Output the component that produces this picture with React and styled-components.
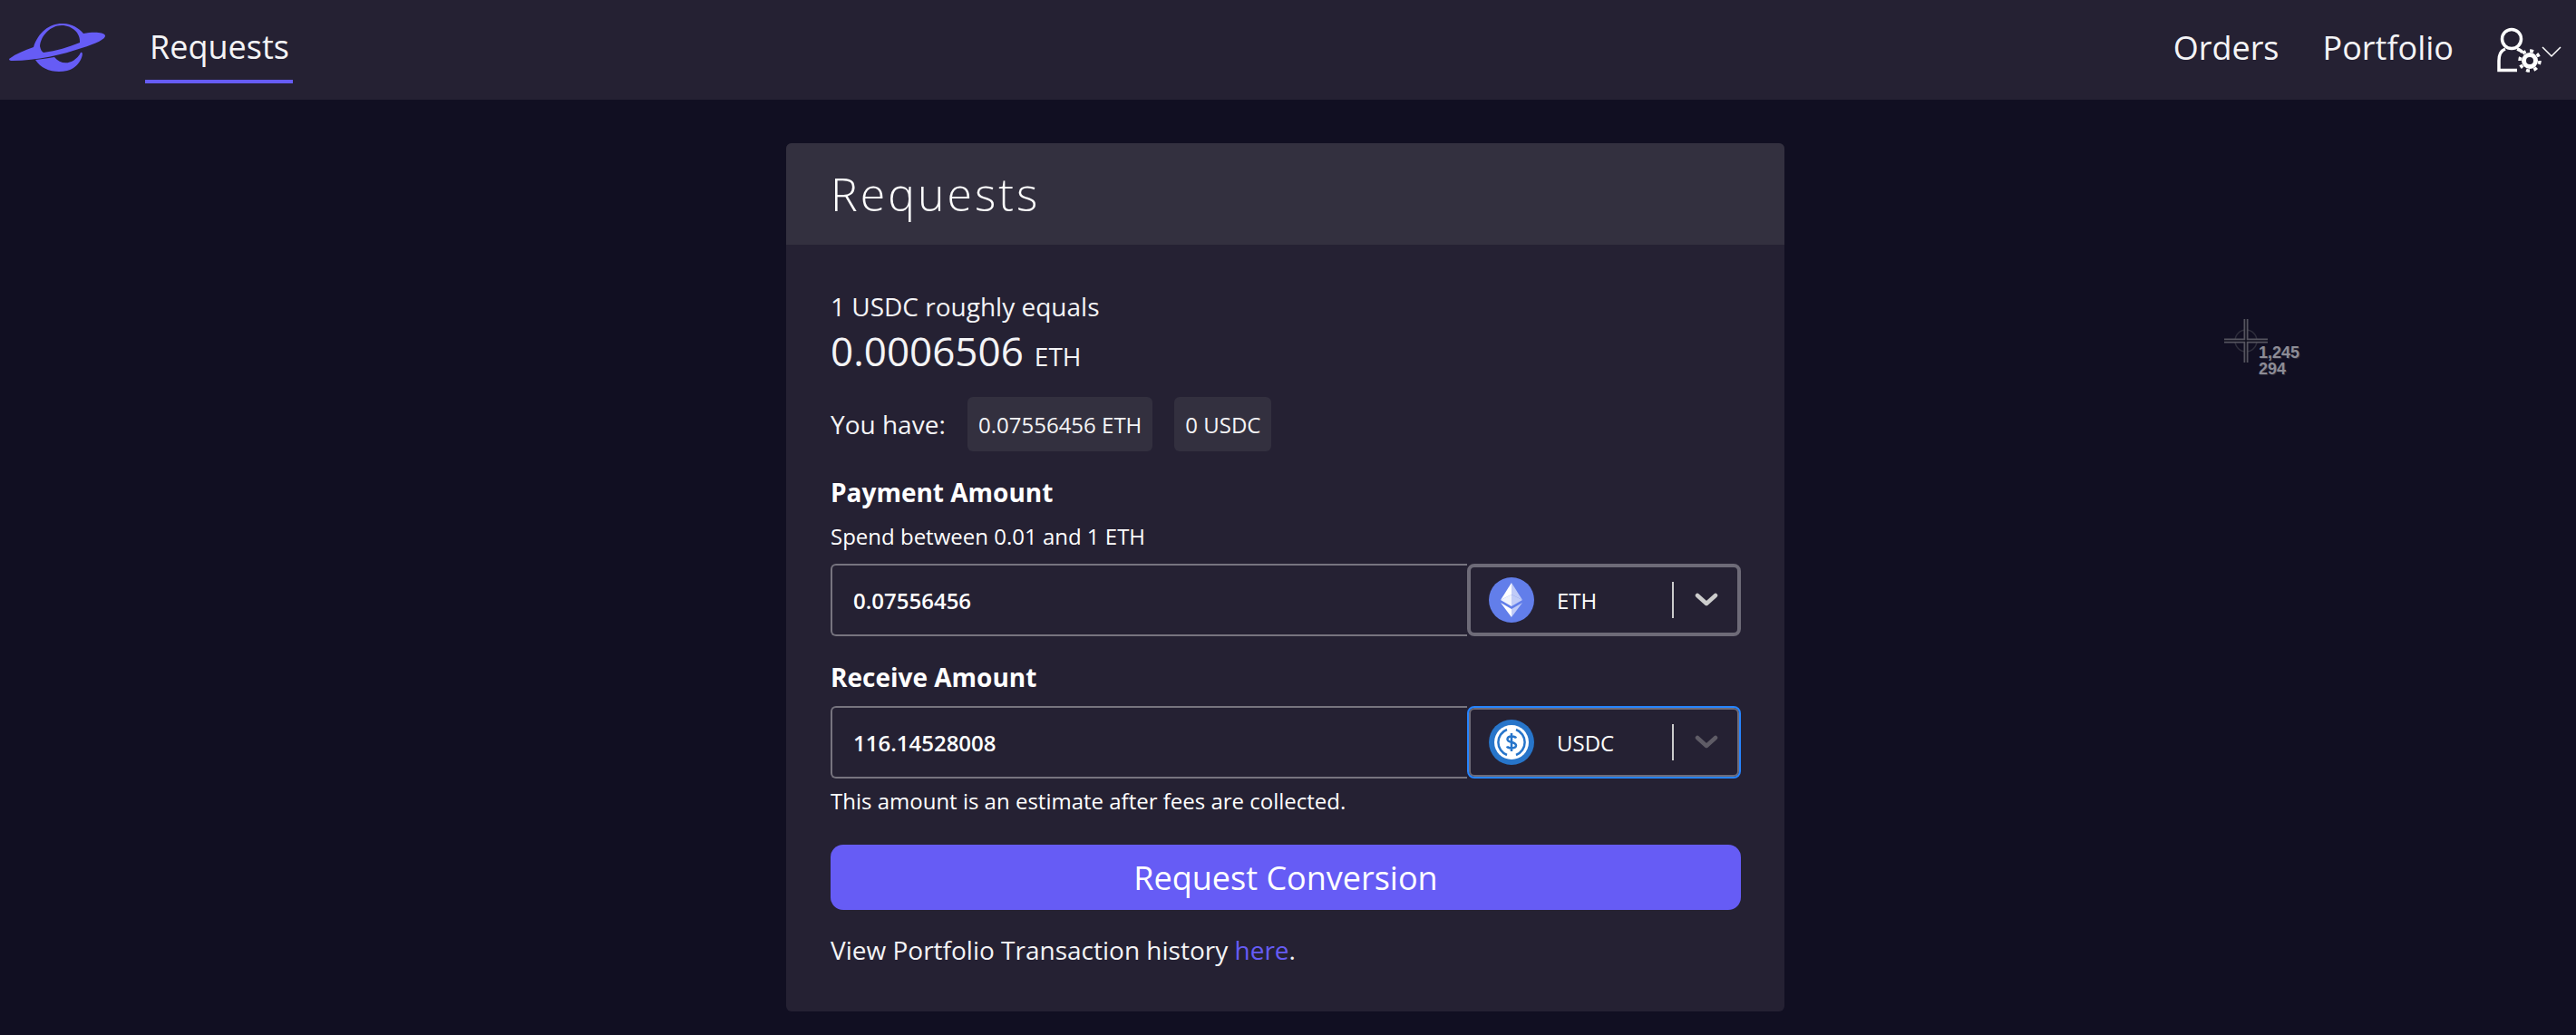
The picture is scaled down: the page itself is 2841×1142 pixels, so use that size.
import styled, { createGlobalStyle } from 'styled-components'

const GlobalStyle = createGlobalStyle`
    html, body {
        margin: 0;
        padding: 0;
        background-color: #110f22;
        color: #fff;
        font-family: "Open Sans", "Noto Sans", sans-serif;
    }
`

const Page = styled.div`
    position: relative;
    width: 2841px;
    height: 1142px;
    overflow: hidden;
    display: flex;
    flex-direction: column;
    align-items: center;
`

const Nav = styled.nav`
    width: 100%;
    height: 110px;
    flex-shrink: 0;
    box-sizing: border-box;
    background-color: #252133;
    display: flex;
    align-items: center;
    justify-content: space-between;
    padding: 0 15px 0 10px;
`

const NavSide = styled.div`
    display: flex;
    align-items: center;
    height: 100%;
`

const NavTab = styled.a`
    align-self: flex-start;
    height: 92px;
    box-sizing: border-box;
    margin-left: 40px;
    padding: 14px 4px 0 5px;
    display: flex;
    align-items: center;
    font-size: 36px;
    font-weight: 400;
    color: #f4f4f6;
    border-bottom: 4px solid #665cf5;
`

const NavLink = styled.a`
    font-size: 36px;
    font-weight: 400;
    color: #f4f4f6;
    margin-right: 48px;
    padding-bottom: 6px;
`

const Card = styled.section`
    width: 1101px;
    margin: 48px 6px 0 0;
    background-color: #252133;
    border-radius: 6px;
    overflow: hidden;
`

const CardHeader = styled.header`
    height: 112px;
    box-sizing: border-box;
    background-color: #33303f;
    padding: 0 49px;
    display: flex;
    align-items: center;
`

const Title = styled.h1`
    margin: 0;
    font-size: 50px;
    font-weight: 300;
    letter-spacing: 3px;
    color: #fff;
`

const CardBody = styled.div`
    padding: 49px 48px 0 49px;
    height: 846px;
    box-sizing: border-box;
`

const RateLabel = styled.div`
    font-size: 28px;
    font-weight: 400;
    line-height: 38px;
    color: #f4f4f6;
`

const RateValue = styled.div`
    font-size: 44px;
    font-weight: 400;
    line-height: 60px;
    color: #f4f4f6;
`

const RateUnit = styled.span`
    font-size: 28px;
    margin-left: 12px;
`

const Balances = styled.div`
    display: flex;
    align-items: center;
    margin-top: 15px;
    font-size: 28px;
    font-weight: 400;
    color: #f4f4f6;
`

const BalanceLabel = styled.span`
    width: 151px;
`

const Chip = styled.span`
    height: 60px;
    box-sizing: border-box;
    display: flex;
    align-items: center;
    padding: 0 12px;
    margin-right: 24px;
    border-radius: 6px;
    background-color: #33303f;
    font-size: 24px;
    font-weight: 400;
`

const FieldLabel = styled.div`
    font-size: 28px;
    font-weight: 700;
    line-height: 38px;
    margin-top: ${p => p.$top}px;
`

const Hint = styled.div`
    font-size: 24px;
    font-weight: 400;
    line-height: 34px;
    margin-top: ${p => p.$top}px;
`

const Field = styled.div`
    display: flex;
    height: 80px;
    margin-top: ${p => p.$top}px;
`

const AmountInput = styled.div`
    width: 702px;
    box-sizing: border-box;
    display: flex;
    align-items: center;
    padding-left: 23px;
    border: 2px solid #77747f;
    border-right: none;
    border-radius: 6px 0 0 6px;
    font-size: 24px;
    font-weight: 600;
    height: 80px;
`

const TokenSelect = styled.div`
    flex: 1;
    box-sizing: border-box;
    display: flex;
    align-items: center;
    padding-left: ${p => (p.$focused ? 22 : 20)}px;
    border: ${p => (p.$focused ? '2px solid #2684ff' : '4px solid #6e6b78')};
    border-radius: 8px;
    box-shadow: ${p => (p.$focused ? 'inset 0 0 0 2px #6e6b78' : 'none')};
`

const TokenName = styled.span`
    width: 127px;
    margin-left: 25px;
    font-size: 24px;
    font-weight: 400;
`

const Divider = styled.span`
    width: 2px;
    height: 40px;
    background-color: #ccc;
    margin-right: 23px;
`

const Chevron = styled.svg`
    width: 26px;
    height: 16px;
    color: ${p => (p.$muted ? '#5f5c66' : '#cccccc')};
`

const ConvertButton = styled.button`
    display: block;
    width: 100%;
    height: 72px;
    margin-top: 31px;
    border: none;
    border-radius: 14px;
    background-color: #665cf5;
    color: #fff;
    font-family: inherit;
    font-size: 36px;
    font-weight: 400;
`

const HistoryRow = styled.p`
    margin: 25px 0 0;
    font-size: 28px;
    font-weight: 400;
    line-height: 38px;
    color: #f4f4f6;
`

const HereLink = styled.a`
    color: #665cf5;
`

const Crosshair = styled.div`
    position: absolute;
    left: 2452px;
    top: 351px;
    width: 90px;
    height: 64px;
`

const CrosshairText = styled.div`
    position: absolute;
    left: 39px;
    top: 29px;
    font-family: "Liberation Sans", sans-serif;
    font-size: 18px;
    font-weight: 700;
    line-height: 18px;
    color: #8d8c96;
    text-shadow: 1px 1px 0 #2a2938;
`

function Logo() {
    return (
        <svg width="110" height="60" viewBox="0 0 110 60" fill="#665cf5">
            <path
                fillRule="evenodd"
                d="M0 40 C8 34 18 30 27 27 C32 10 46 0 60 1 C69 1 77 6 82 12 C92 10 104 10 106 14 C107 18 96 23 80 28 C60 35 30 42 4 42 C2 42 0 42 0 40 Z M34 26 C35 30 36 32 38 33 C52 31 66 27 78 22 C79 12 70 3 58 3 C46 3 35 14 34 26 Z"
            />
            <path d="M29 41 C38 40 44 39 50 38 C58 48 72 46 79 33 C84 31 79 50 64 53 C50 56 36 52 29 41 Z" />
        </svg>
    )
}

function UserGear() {
    return (
        <svg width="72" height="50" viewBox="0 0 72 50" fill="none">
            <circle cx="16" cy="13" r="10.5" stroke="#fff" strokeWidth="3.5" />
            <path d="M9 24 C4 26 2 31 2 37 V47.5 H22" stroke="#fff" strokeWidth="3.5" />
            <path d="M22 24 C25 25 27 26 28 28" stroke="#fff" strokeWidth="3.5" />
            <circle cx="36" cy="37" r="6.5" stroke="#fff" strokeWidth="5" />
            <circle cx="36" cy="37" r="11" stroke="#fff" strokeWidth="3.5" strokeDasharray="4 4.6" />
            <path d="M50 22 L60 32 L70 22" stroke="#fff" strokeWidth="1.5" />
        </svg>
    )
}

function EthIcon() {
    return (
        <svg width="50" height="50" viewBox="0 0 50 50">
            <circle cx="25" cy="25" r="25" fill="#627eea" />
            <path d="M25 6 V19 L37 25 Z" fill="#fff" fillOpacity=".6" />
            <path d="M25 6 L13 25 L25 19 Z" fill="#fff" />
            <path d="M25 19 L13 25 L25 32 Z" fill="#fff" fillOpacity=".9" />
            <path d="M25 19 V32 L37 25 Z" fill="#c1ccf7" />
            <path d="M25 35 V44 L37 28 Z" fill="#fff" fillOpacity=".6" />
            <path d="M25 35 L13 28 L25 44 Z" fill="#fff" />
        </svg>
    )
}

function UsdcIcon() {
    return (
        <svg width="50" height="50" viewBox="0 0 50 50">
            <circle cx="25" cy="25" r="25" fill="#2775ca" />
            <circle cx="25" cy="25" r="19" fill="#fff" />
            <path d="M20 11 A15 15 0 0 0 20 39 M30 11 A15 15 0 0 1 30 39" fill="none" stroke="#2775ca" strokeWidth="2.5" />
            <path d="M30 20.5 C29 18 21 17.5 20.5 21.5 C20 26 30 24 30 28.5 C30 32.5 21 32 20 29.5 M25 15 V35" fill="none" stroke="#2775ca" strokeWidth="2.5" />
        </svg>
    )
}

function Caret({ muted }) {
    return (
        <Chevron $muted={muted} viewBox="0 0 26 16" fill="none">
            <path d="M3 3 L13 12 L23 3" stroke="currentColor" strokeWidth="4.5" strokeLinecap="round" strokeLinejoin="round" />
        </Chevron>
    )
}

export default function App() {
    return (
        <>
            <GlobalStyle />
            <Page>
                <Nav>
                    <NavSide>
                        <Logo />
                        <NavTab>Requests</NavTab>
                    </NavSide>
                    <NavSide>
                        <NavLink>Orders</NavLink>
                        <NavLink>Portfolio</NavLink>
                        <UserGear />
                    </NavSide>
                </Nav>

                <Card>
                    <CardHeader>
                        <Title>Requests</Title>
                    </CardHeader>
                    <CardBody>
                        <RateLabel>1 USDC roughly equals</RateLabel>
                        <RateValue>0.0006506<RateUnit>ETH</RateUnit></RateValue>
                        <Balances>
                            <BalanceLabel>You have:</BalanceLabel>
                            <Chip>0.07556456 ETH</Chip>
                            <Chip>0 USDC</Chip>
                        </Balances>

                        <FieldLabel $top={26}>Payment Amount</FieldLabel>
                        <Hint $top={13}>Spend between 0.01 and 1 ETH</Hint>
                        <Field $top={13}>
                            <AmountInput>0.07556456</AmountInput>
                            <TokenSelect>
                                <EthIcon />
                                <TokenName>ETH</TokenName>
                                <Divider />
                                <Caret />
                            </TokenSelect>
                        </Field>

                        <FieldLabel $top={26}>Receive Amount</FieldLabel>
                        <Field $top={13}>
                            <AmountInput>116.14528008</AmountInput>
                            <TokenSelect $focused>
                                <UsdcIcon />
                                <TokenName>USDC</TokenName>
                                <Divider />
                                <Caret muted />
                            </TokenSelect>
                        </Field>
                        <Hint $top={8}>This amount is an estimate after fees are collected.</Hint>

                        <ConvertButton>Request Conversion</ConvertButton>
                        <HistoryRow>View Portfolio Transaction history <HereLink>here</HereLink>.</HistoryRow>
                    </CardBody>
                </Card>

                <Crosshair>
                    <svg width="50" height="50" viewBox="0 0 50 50" fill="none">
                        <circle cx="25" cy="25" r="12" stroke="#2f2e3c" strokeWidth="1.5" />
                        <path d="M25 1 V49 M1 25 H49" stroke="#55545f" strokeWidth="5" />
                        <path d="M25 1 V49 M1 25 H49" stroke="#0f0e1e" strokeWidth="1.5" />
                    </svg>
                    <CrosshairText>1,245<br />294</CrosshairText>
                </Crosshair>
            </Page>
        </>
    )
}
